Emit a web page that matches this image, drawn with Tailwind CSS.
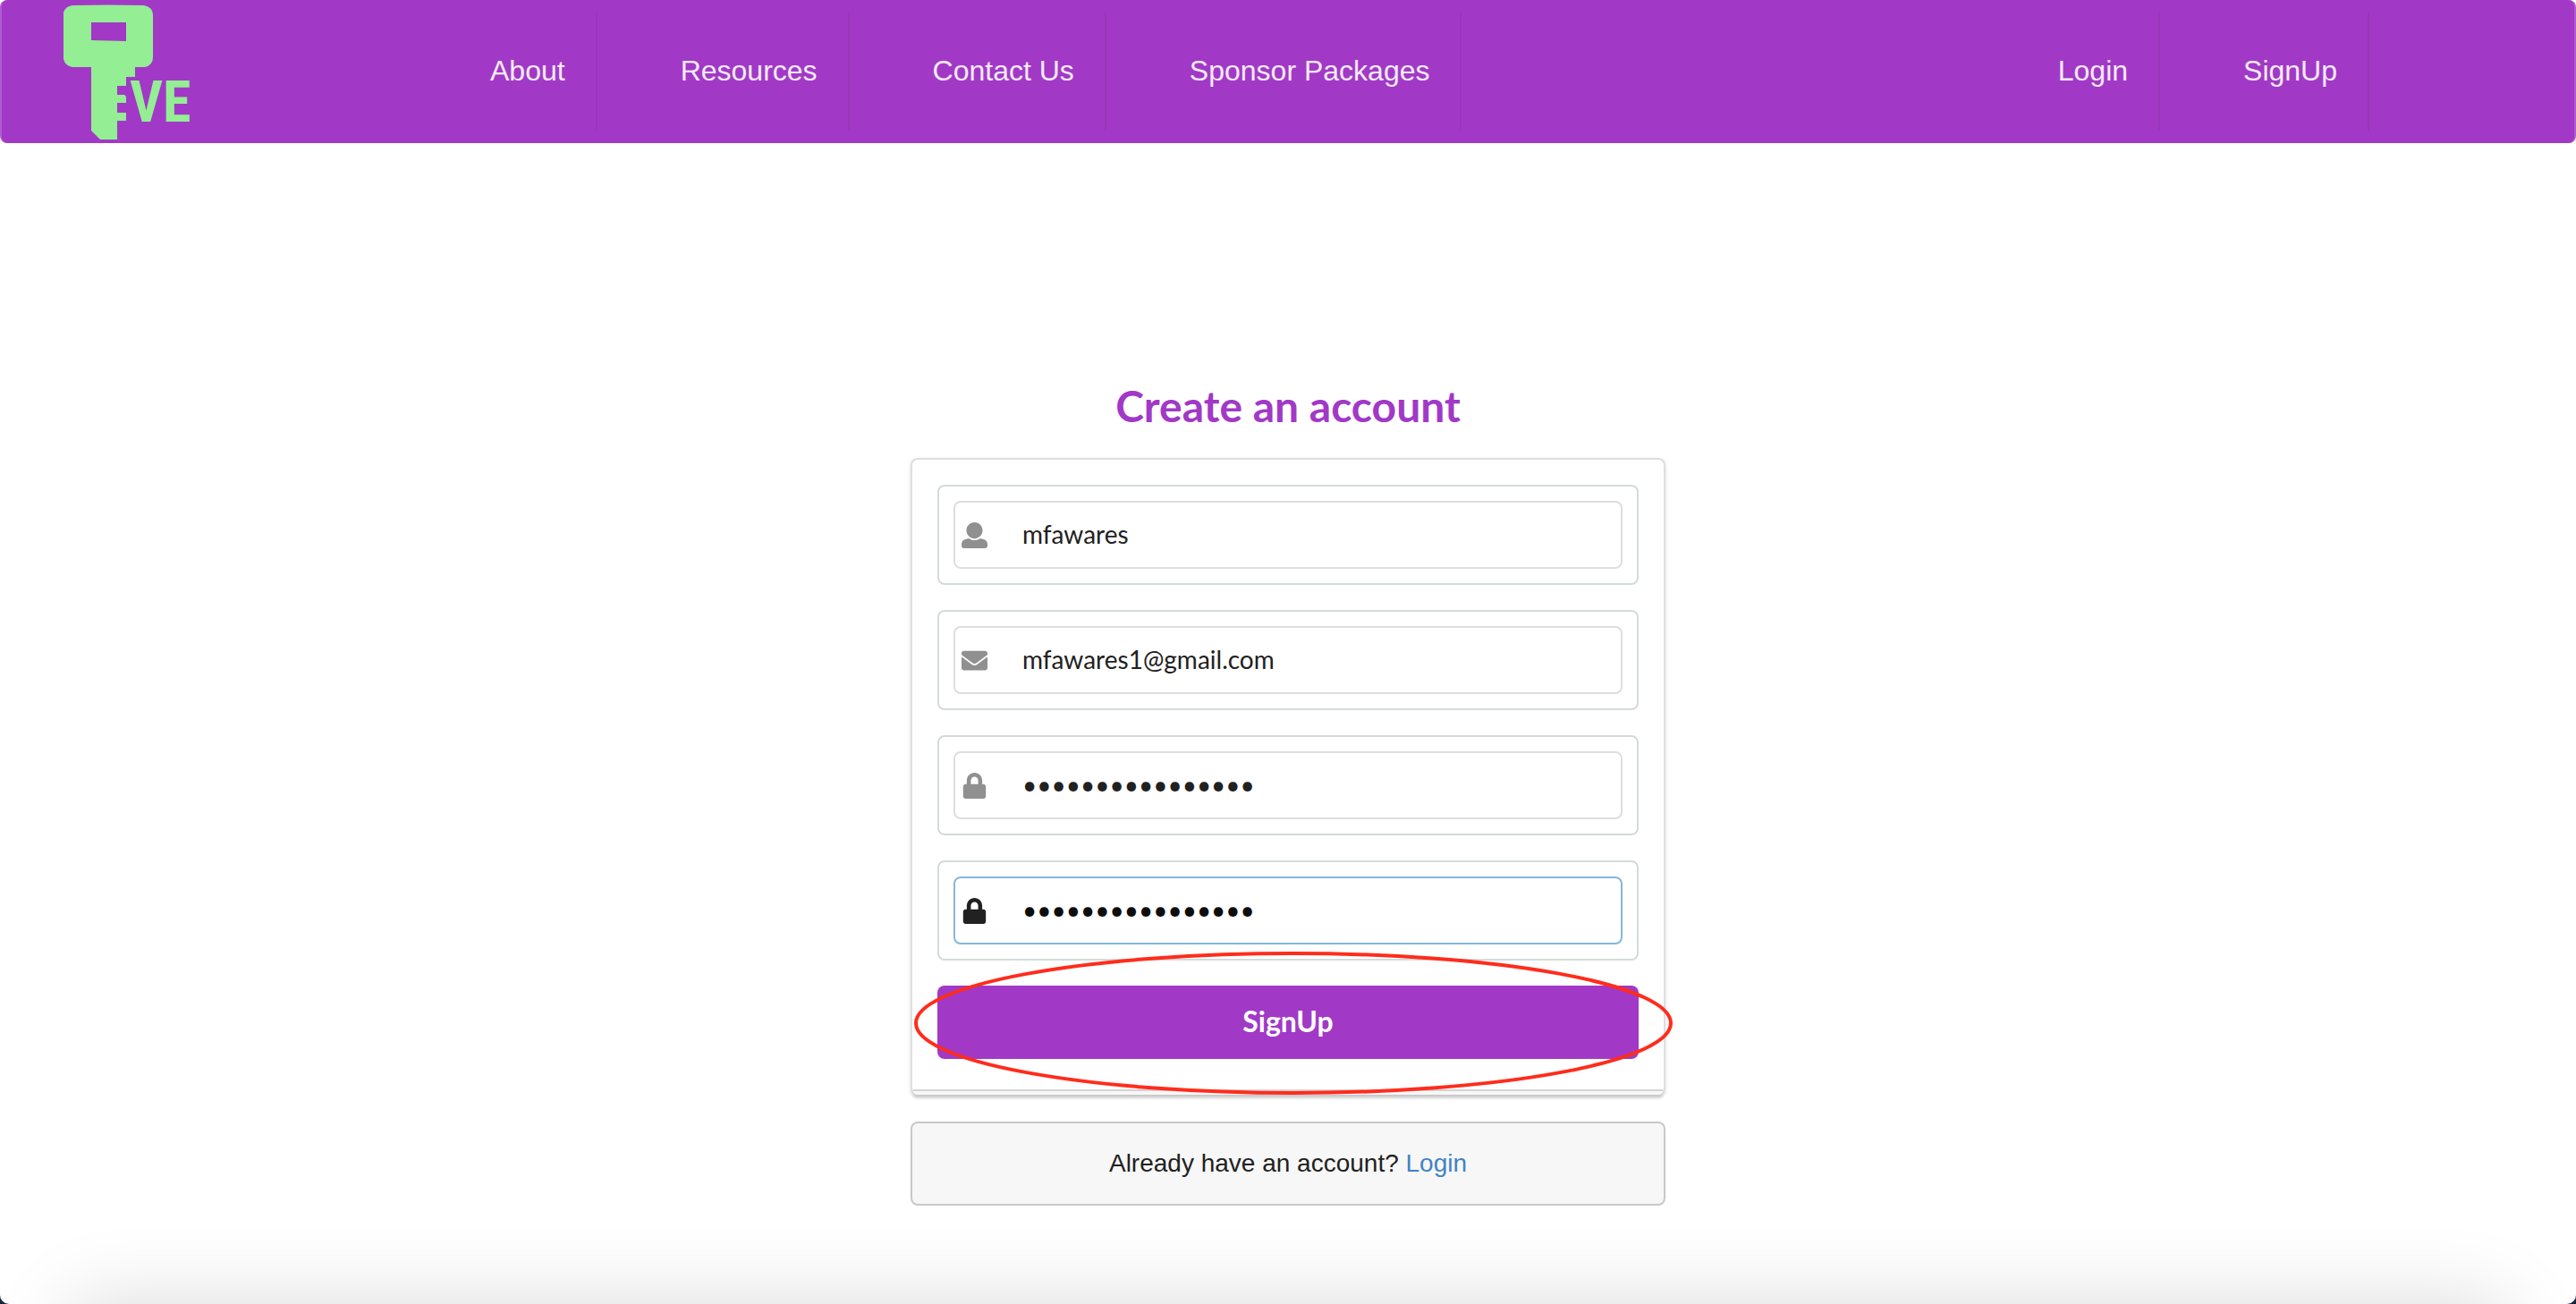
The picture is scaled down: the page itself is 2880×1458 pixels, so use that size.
<!DOCTYPE html>
<html lang="en">
<head>
<meta charset="utf-8">
<meta name="viewport" content="width=device-width, initial-scale=1">
<title>Create an account</title>
<script src="https://cdn.jsdelivr.net/npm/@tailwindcss/browser@4"></script>
</head>
<body class="bg-[#14233d] font-['Lato',sans-serif] text-[28px] text-[#212121]">
<div class="relative flex min-h-screen flex-col overflow-hidden rounded-b-[10px] bg-white">
  <header class="flex h-40 items-center rounded-lg border-x-2 border-[#b05ad0] bg-[#a139c6] font-['Liberation_Sans',Arial,sans-serif] text-[32px] leading-10 text-white/90">
    <a href="#" aria-label="EVE home" class="w-[453px] shrink-0">
      <svg class="h-40 w-[240px]" viewBox="2 0 240 160" fill="#94ee94">
        <path fill-rule="evenodd" d="M81 6Q121 5 161 6Q171 8 171 17V64Q171 73 162 75H151V86H141V96H131V106H139Q141 107 141 109V115H131V126H141V135H131V156H112L102 146V75H81Q73 74 71 66V14Q73 7 81 6ZM102 25V45L141 46V25Z"/>
        <text x="145" y="136" font-size="64" font-weight="700" class="font-['Liberation_Sans_Narrow','Roboto_Condensed','Open_Sans_Condensed','DejaVu_Sans_Condensed',sans-serif]">VE</text>
      </svg>
    </a>
    <nav class="flex flex-1 justify-between whitespace-nowrap pr-[229px]">
      <div class="flex">
        <a href="#" class="flex h-[132px] items-center border-r-2 border-[#9638ba] pr-[34px] pb-[2px] pl-[93px]">About</a>
        <a href="#" class="flex h-[132px] items-center border-r-2 border-[#9638ba] pr-[34px] pb-[2px] pl-[93px]">Resources</a>
        <a href="#" class="flex h-[132px] items-center border-r-2 border-[#9638ba] pr-[34px] pb-[2px] pl-[93px]">Contact Us</a>
        <a href="#" class="flex h-[132px] items-center border-r-2 border-[#9638ba] pr-[34px] pb-[2px] pl-[93px]">Sponsor Packages</a>
      </div>
      <div class="flex">
        <a href="#" class="flex h-[132px] items-center border-r-2 border-[#9638ba] pr-[34px] pb-[2px] pl-[93px]">Login</a>
        <a href="#" class="flex h-[132px] items-center border-r-2 border-[#9638ba] pr-[34px] pb-[2px] pl-[93px]">SignUp</a>
      </div>
    </nav>
  </header>

  <main class="mx-auto w-full max-w-[844px] pt-[264px] pb-[110px]">
    <h1 class="text-center text-5xl leading-[60px] font-bold text-[#a139c6]">Create an account</h1>
    <div class="relative mt-7">
      <form class="overflow-hidden rounded-lg border-2 border-b-0 border-[#dedede] bg-white shadow-[0_2px_4px_rgba(34,36,38,0.15),0_6px_3px_-2px_rgba(34,36,38,0.15)]">
        <div class="flex flex-col gap-7 px-7 pt-7 pb-[34px]">
          <div class="rounded-lg border-2 border-[#d4dada] p-4">
            <label class="flex h-[76px] items-center rounded-lg border-2 border-[#dedede] pl-[7px]">
              <svg class="h-[29px] w-[29px] shrink-0" viewBox="0 0 512 512" fill="#909090" role="img" aria-label="Username"><path d="M256 0c88.366 0 160 71.634 160 160s-71.634 160-160 160S96 248.366 96 160 167.634 0 256 0zm183.283 333.821l-71.313-17.828c-74.923 53.89-165.738 41.864-223.94 0l-71.313 17.828C29.981 344.505 0 382.903 0 426.955V464c0 26.51 21.49 48 48 48h416c26.51 0 48-21.49 48-48v-37.045c0-44.052-29.981-82.45-72.717-93.134z"/></svg>
              <input type="text" value="mfawares" class="h-full min-w-0 flex-1 pb-[2px] pl-[39px] outline-none">
            </label>
          </div>
          <div class="rounded-lg border-2 border-[#d4dada] p-4">
            <label class="flex h-[76px] items-center rounded-lg border-2 border-[#dedede] pl-[7px]">
              <svg class="h-[29px] w-[29px] shrink-0" viewBox="0 0 512 512" fill="#909090" role="img" aria-label="Email"><path d="M502.3 190.8c3.9-3.1 9.7-.2 9.7 4.7V400c0 26.5-21.5 48-48 48H48c-26.5 0-48-21.5-48-48V195.6c0-5 5.7-7.8 9.7-4.7 22.4 17.4 52.1 39.5 154.1 113.6 21.1 15.4 56.7 47.8 92.2 47.6 35.7.3 72-32.8 92.3-47.6 102-74.1 131.6-96.3 154-113.7zM256 320c23.2.4 56.6-29.2 73.4-41.4 132.7-96.3 142.8-104.7 173.4-128.7 5.8-4.5 9.2-11.5 9.2-18.9v-19c0-26.5-21.5-48-48-48H48c-26.5 0-48 21.5-48 48v19c0 7.4 3.4 14.3 9.2 18.9 30.6 23.9 40.7 32.4 173.4 128.7 16.8 12.2 50.2 41.8 73.4 41.4z"/></svg>
              <input type="email" value="mfawares1@gmail.com" class="h-full min-w-0 flex-1 pb-[2px] pl-[39px] outline-none">
            </label>
          </div>
          <div class="rounded-lg border-2 border-[#d4dada] p-4">
            <label class="flex h-[76px] items-center rounded-lg border-2 border-[#dedede] pl-[7px]">
              <svg class="h-[29px] w-[29px] shrink-0" viewBox="-32 0 512 512" fill="#909090" role="img" aria-label="Password"><path d="M400 224h-24v-72C376 68.2 307.8 0 224 0S72 68.2 72 152v72H48c-26.5 0-48 21.5-48 48v192c0 26.5 21.5 48 48 48h352c26.5 0 48-21.5 48-48V272c0-26.5-21.5-48-48-48zm-104 0H152v-72c0-39.7 32.3-72 72-72s72 32.3 72 72v72z"/></svg>
              <input type="password" value="abcdefghijklmnop" class="h-full min-w-0 flex-1 pb-[2px] pl-[39px] outline-none">
            </label>
          </div>
          <div class="rounded-lg border-2 border-[#d4dada] p-4">
            <label class="flex h-[76px] items-center rounded-lg border-2 border-[#85b7d9] pl-[7px]">
              <svg class="h-[29px] w-[29px] shrink-0" viewBox="-32 0 512 512" fill="#212121" role="img" aria-label="Confirm password"><path d="M400 224h-24v-72C376 68.2 307.8 0 224 0S72 68.2 72 152v72H48c-26.5 0-48 21.5-48 48v192c0 26.5 21.5 48 48 48h352c26.5 0 48-21.5 48-48V272c0-26.5-21.5-48-48-48zm-104 0H152v-72c0-39.7 32.3-72 72-72s72 32.3 72 72v72z"/></svg>
              <input type="password" value="abcdefghijklmnop" class="h-full min-w-0 flex-1 pb-[2px] pl-[39px] text-[#0d0d0d] outline-none">
            </label>
          </div>
          <button type="submit" class="h-[82px] rounded-lg bg-[#a139c6] pb-[2px] text-[32px] font-bold text-white">SignUp</button>
        </div>
        <div class="h-1.5 border-t-2 border-[#d4d4d5] bg-[#f7f7f7]"></div>
      </form>
      <!-- highlight ring around the sign-up button -->
      <svg class="pointer-events-none absolute -right-2.5 bottom-0 h-[160px] w-[850px]" viewBox="0 0 850 160" fill="none"><ellipse cx="424" cy="80" rx="422" ry="78" stroke="#ff2c1c" stroke-width="4"/></svg>
    </div>
    <p class="mt-[30px] flex h-[94px] items-center justify-center rounded-lg border-2 border-[#c8c8c8] bg-[#f7f7f7] font-['Liberation_Sans',Arial,sans-serif]"><span>Already have an account? <a href="#" class="text-[#4183c4]">Login</a></span></p>
  </main>
  <!-- soft shade along the bottom edge -->
  <div class="pointer-events-none absolute inset-x-[80px] top-full h-40 shadow-[0_0_90px_rgba(0,0,0,0.15)]"></div>
</div>
</body>
</html>
